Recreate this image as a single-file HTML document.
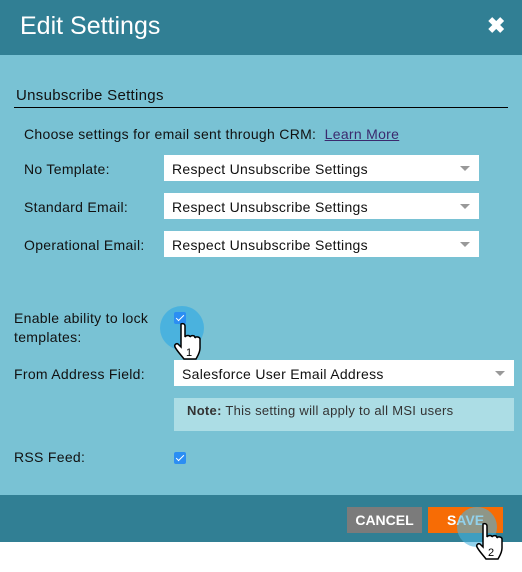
<!DOCTYPE html>
<html><head><meta charset="utf-8"><style>
*{margin:0;padding:0;box-sizing:border-box}
body{width:522px;height:572px;background:#fff;font-family:"Liberation Sans",sans-serif;position:relative;overflow:hidden;color:#111}
.a{position:absolute}
.hdr{left:0;top:0;width:522px;height:55px;background:#317f94}
.bd{left:0;top:55px;width:522px;height:440px;background:#79c2d4}
.ft{left:0;top:495px;width:522px;height:47px;background:#317f94}
.t{font-size:14px;white-space:nowrap;letter-spacing:.3px}
.sel{background:#fff;height:26px;font-size:14px;padding:6px 8px;white-space:nowrap;letter-spacing:.3px}
.sel:after{content:"";position:absolute;right:9px;top:11px;border:5px solid transparent;border-top:5px solid #999;border-bottom:0}
.cb{width:12px;height:12px;background:#2b8ef3;border-radius:2px}
.cb:after{content:"";position:absolute;left:4px;top:1px;width:3px;height:7px;border:solid #fff;border-width:0 1.5px 1.5px 0;transform:rotate(45deg)}
.btn{height:26px;color:#fff;font-size:14px;font-weight:bold;text-align:center;line-height:26px}
</style></head><body>
<div class="a hdr"></div>
<div class="a" style="left:20px;top:12px;color:#fff;font-size:25px">Edit Settings</div>
<div class="a" style="left:487px;top:13px;color:#fff;font-size:22px;font-weight:bold">✖</div>
<div class="a bd"></div>
<div class="a t" style="left:16px;top:87px;font-size:15px">Unsubscribe Settings</div>
<div class="a" style="left:14px;top:107px;width:494px;height:1px;background:#000"></div>
<div class="a t" style="left:24px;top:126px">Choose settings for email sent through CRM:&nbsp; <span style="color:#3b2a6e;text-decoration:underline">Learn More</span></div>
<div class="a t" style="left:24px;top:161px">No Template:</div>
<div class="a t" style="left:24px;top:199px">Standard Email:</div>
<div class="a t" style="left:24px;top:237px">Operational Email:</div>
<div class="a sel" style="left:164px;top:155px;width:315px">Respect Unsubscribe Settings</div>
<div class="a sel" style="left:164px;top:193px;width:315px">Respect Unsubscribe Settings</div>
<div class="a sel" style="left:164px;top:231px;width:315px">Respect Unsubscribe Settings</div>
<div class="a t" style="left:14px;top:309px;line-height:19px">Enable ability to lock<br>templates:</div>
<div class="a" style="left:160px;top:306px;width:44px;height:44px;border-radius:50%;background:#4ab2de"></div>
<div class="a cb" style="left:174px;top:312px"></div>
<div class="a t" style="left:14px;top:366px">From Address Field:</div>
<div class="a sel" style="left:174px;top:360px;width:340px">Salesforce User Email Address</div>
<div class="a" style="left:174px;top:398px;width:340px;height:33px;background:#acdde5;font-size:13px;padding:5px 13px;color:#333;white-space:nowrap;letter-spacing:.3px"><b>Note:</b> This setting will apply to all MSI users</div>
<div class="a t" style="left:14px;top:449px">RSS Feed:</div>
<div class="a cb" style="left:174px;top:452px"></div>
<div class="a ft"></div>
<div class="a btn" style="left:347px;top:507px;width:75px;background:#7b7b7b">CANCEL</div>
<div class="a btn" style="left:428px;top:507px;width:75px;background:#f76c05">SAVE</div>
<div class="a" style="left:457px;top:507px;width:40px;height:40px;border-radius:50%;background:rgba(74,178,222,.6)"></div>
<svg class="a" style="left:172px;top:322px" width="36" height="42" viewBox="0 0 36 42"><path d="M9 2c2-1 4 0 4 2v11c1-2 5-2 5 0 1-2 5-2 5 1 1-2 5-1 5 1v9c0 5-3 9-4 11H12c-3-4-7-8-9-12-1-2 1-4 3-3l3 3V4z" fill="#fff" stroke="#000" stroke-width="1.5"/><text x="14" y="34" font-size="11" font-family="Liberation Sans">1</text></svg>
<svg class="a" style="left:474px;top:522px" width="36" height="42" viewBox="0 0 36 42"><path d="M9 2c2-1 4 0 4 2v11c1-2 5-2 5 0 1-2 5-2 5 1 1-2 5-1 5 1v9c0 5-3 9-4 11H12c-3-4-7-8-9-12-1-2 1-4 3-3l3 3V4z" fill="#fff" stroke="#000" stroke-width="1.5"/><text x="14" y="34" font-size="11" font-family="Liberation Sans">2</text></svg>
</body></html>
